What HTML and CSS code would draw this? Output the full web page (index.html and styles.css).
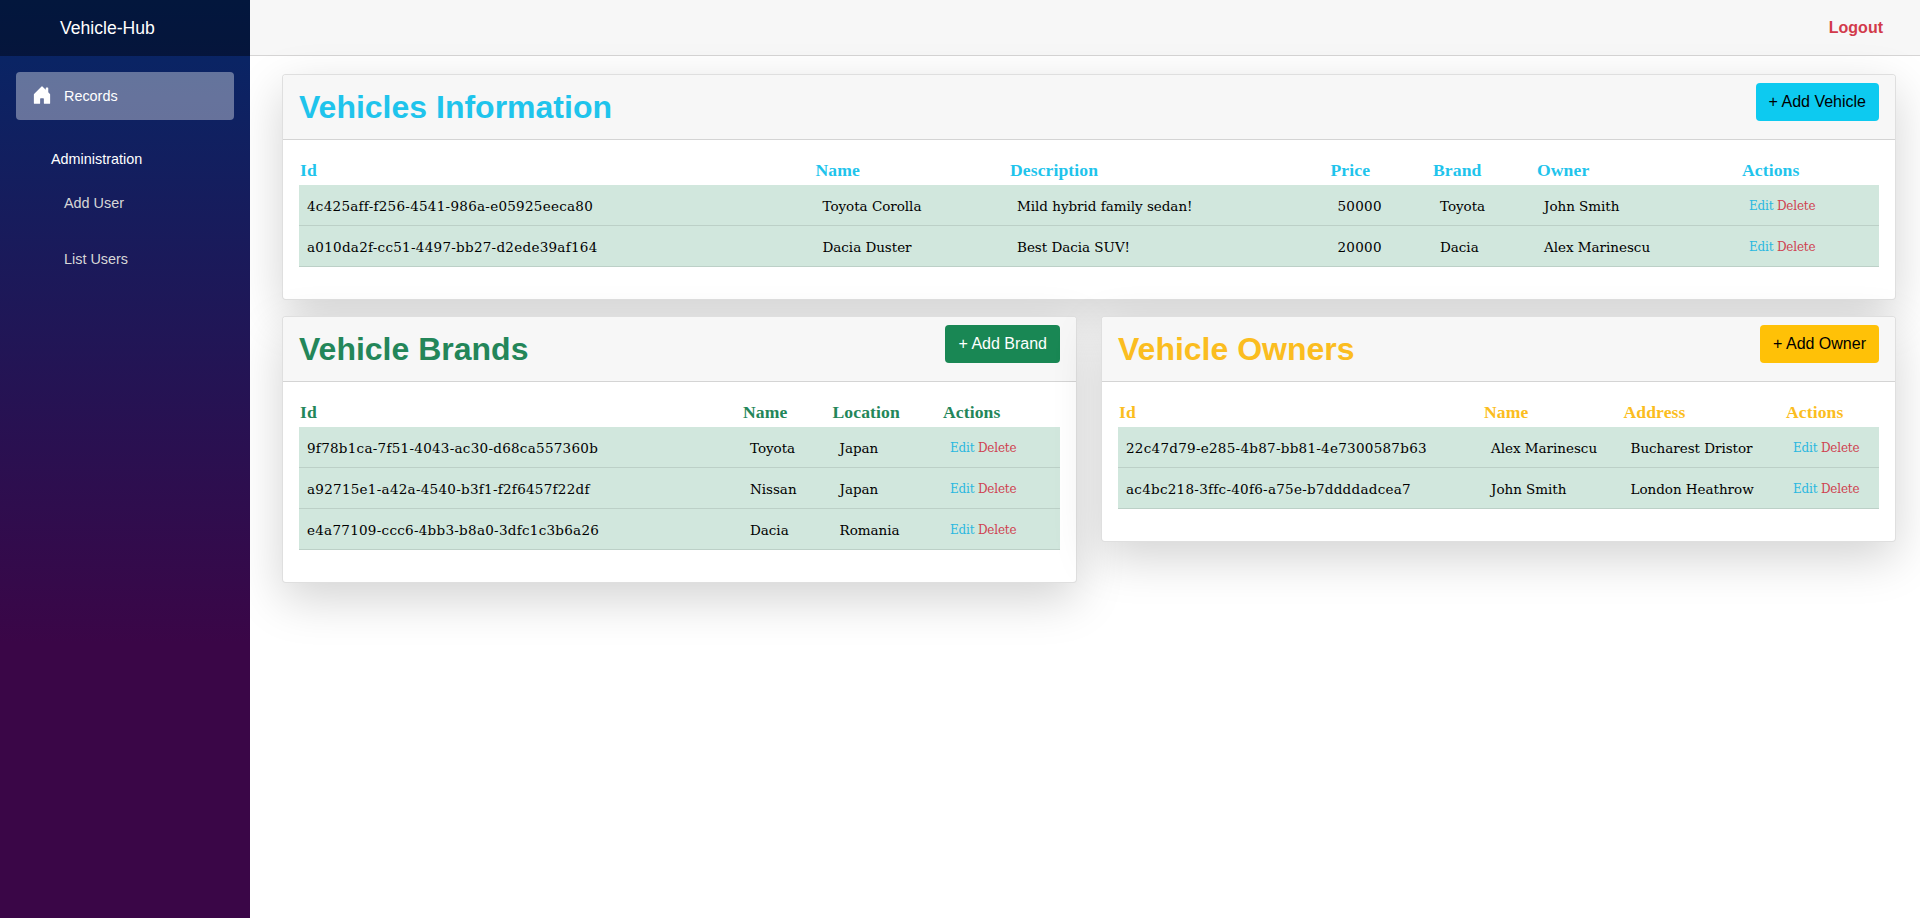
FILE: index.html
```html
<!DOCTYPE html>
<html lang="en">
<head>
<meta charset="utf-8">
<title>Vehicle-Hub</title>
<link rel="stylesheet" href="styles.css">
</head>
<body>
<div class="page">
  <aside class="sidebar">
    <div class="brand">Vehicle-Hub</div>
    <nav class="nav">
      <a class="nav-link active"><svg class="icon" viewBox="0 0 16 16"><path fill="currentColor" d="M6.5 14.5v-3.505c0-.245.25-.495.5-.495h2c.25 0 .5.25.5.5v3.5a.5.5 0 0 0 .5.5h4a.5.5 0 0 0 .5-.5v-7a.5.5 0 0 0-.146-.354L13 5.793V2.5a.5.5 0 0 0-.5-.5h-1a.5.5 0 0 0-.5.5v1.293L8.354 1.146a.5.5 0 0 0-.708 0l-6 6A.5.5 0 0 0 1.5 7.5v7a.5.5 0 0 0 .5.5h4a.5.5 0 0 0 .5-.5Z"/></svg>Records</a>
      <div class="nav-title">Administration</div>
      <a class="nav-link sub">Add User</a>
      <a class="nav-link sub">List Users</a>
    </nav>
  </aside>
  <main class="main">
    <header class="topbar"><a class="logout">Logout</a></header>
    <div class="content">
      <section class="card wide info">
        <div class="card-header"><h2>Vehicles Information</h2><button class="btn">+ Add Vehicle</button></div>
        <div class="card-body">
          <table class="table">
            <colgroup><col class="v-id"><col class="v-name"><col class="v-desc"><col class="v-price"><col class="v-brand"><col class="v-owner"><col></colgroup>
            <thead><tr><th>Id</th><th>Name</th><th>Description</th><th>Price</th><th>Brand</th><th>Owner</th><th>Actions</th></tr></thead>
            <tbody>
              <tr><td class="num">4c425aff-f256-4541-986a-e05925eeca80</td><td>Toyota Corolla</td><td>Mild hybrid family sedan!</td><td class="num">50000</td><td>Toyota</td><td>John Smith</td><td class="actions"><a class="edit">Edit</a> <a class="delete">Delete</a></td></tr>
              <tr><td class="num">a010da2f-cc51-4497-bb27-d2ede39af164</td><td>Dacia Duster</td><td>Best Dacia SUV!</td><td class="num">20000</td><td>Dacia</td><td>Alex Marinescu</td><td class="actions"><a class="edit">Edit</a> <a class="delete">Delete</a></td></tr>
            </tbody>
          </table>
        </div>
      </section>
      <section class="card success">
        <div class="card-header"><h2>Vehicle Brands</h2><button class="btn">+ Add Brand</button></div>
        <div class="card-body">
          <table class="table">
            <colgroup><col class="b-id"><col class="b-name"><col class="b-loc"><col></colgroup>
            <thead><tr><th>Id</th><th>Name</th><th>Location</th><th>Actions</th></tr></thead>
            <tbody>
              <tr><td class="num">9f78b1ca-7f51-4043-ac30-d68ca557360b</td><td>Toyota</td><td>Japan</td><td class="actions"><a class="edit">Edit</a> <a class="delete">Delete</a></td></tr>
              <tr><td class="num">a92715e1-a42a-4540-b3f1-f2f6457f22df</td><td>Nissan</td><td>Japan</td><td class="actions"><a class="edit">Edit</a> <a class="delete">Delete</a></td></tr>
              <tr><td class="num">e4a77109-ccc6-4bb3-b8a0-3dfc1c3b6a26</td><td>Dacia</td><td>Romania</td><td class="actions"><a class="edit">Edit</a> <a class="delete">Delete</a></td></tr>
            </tbody>
          </table>
        </div>
      </section>
      <section class="card warning">
        <div class="card-header"><h2>Vehicle Owners</h2><button class="btn">+ Add Owner</button></div>
        <div class="card-body">
          <table class="table">
            <colgroup><col class="o-id"><col class="o-name"><col class="o-addr"><col></colgroup>
            <thead><tr><th>Id</th><th>Name</th><th>Address</th><th>Actions</th></tr></thead>
            <tbody>
              <tr><td class="num">22c47d79-e285-4b87-bb81-4e7300587b63</td><td>Alex Marinescu</td><td>Bucharest Dristor</td><td class="actions"><a class="edit">Edit</a> <a class="delete">Delete</a></td></tr>
              <tr><td class="num">ac4bc218-3ffc-40f6-a75e-b7ddddadcea7</td><td>John Smith</td><td>London Heathrow</td><td class="actions"><a class="edit">Edit</a> <a class="delete">Delete</a></td></tr>
            </tbody>
          </table>
        </div>
      </section>
    </div>
  </main>
</div>
</body>
</html>
```
FILE: styles.css
```css
* { box-sizing: border-box; }
body { margin: 0; font: 16px/24px "Liberation Sans", Arial, sans-serif; color: #000; background: #fff; }
.page { display: flex; height: 918px; overflow: hidden; }

.sidebar { width: 250px; flex: none; color: #fff; background: linear-gradient(180deg, rgb(5, 39, 103) 0%, #3a0647 70%); position: relative; z-index: 1; }
.brand { height: 56px; padding-left: 60px; font-size: 17.6px; line-height: 56px; background: rgba(0, 0, 0, .4); }
.nav { padding: 16px 16px 0; font-size: 14.4px; }
.nav-link { display: flex; align-items: center; height: 48px; padding-left: 16px; border-radius: 4px; }
.nav-link.active { background: rgba(255, 255, 255, .37); }
.icon { width: 20px; height: 20px; margin: 0 12px 2px 0; }
.nav-title { height: 48px; line-height: 48px; padding-left: 35px; margin-top: 15px; }
.nav-link.sub { padding-left: 48px; margin-bottom: 8px; color: #d7d7d7; }
.nav-title + .nav-link.sub { margin-top: -4px; }

.main { flex: 1; min-width: 0; }
.topbar { height: 56px; display: flex; align-items: center; justify-content: flex-end; padding-right: 37px; background: #f7f7f7; border-bottom: 1px solid #d6d5d5; }
.logout { color: #d23a4b; font-weight: bold; }
.content { display: grid; grid-template-columns: 1fr 1fr; gap: 16px 24px; align-items: start; padding: 18px 24px 0 32px; }

.card { background: #fff; border: 1px solid rgba(0, 0, 0, .125); background-clip: border-box; border-radius: 4px; box-shadow: 0 16px 48px rgba(0, 0, 0, .175); }
.card.wide { grid-column: 1 / 3; }
.card-header { height: 65px; display: flex; justify-content: space-between; align-items: flex-start; padding: 8px 16px; background: #f7f7f7; border-bottom: 1px solid #d4d4d4; border-radius: 3px 3px 0 0; }
.card-header h2 { margin: 0; font-size: 32px; line-height: 48px; font-weight: bold; color: var(--accent); }
.card-body { padding: 16px 16px 32px; }
.info { --accent: #0dcaf0; --on-accent: #000; }
.success { --accent: #198754; --on-accent: #fff; }
.warning { --accent: #ffc107; --on-accent: #000; }
.btn { height: 38px; padding: 0 13px; border: 0; border-radius: 4px; font: 16px/24px "Liberation Sans", Arial, sans-serif; color: var(--on-accent); background: var(--accent); }
.info h2, .info th { color: #1fc4ec; }
.success h2, .success th { color: #238659; }
.warning h2, .warning th { color: #fbbd20; }

.table { width: 100%; table-layout: fixed; border-collapse: separate; border-spacing: 0; }
.table th { height: 29px; padding: 2px 1px 3px; text-align: left; font: bold 17.6px/24px "Liberation Serif", "Times New Roman", serif; letter-spacing: .1px; }
.table td { height: 41px; padding: 9px 8px 7px; font: 13.5px/24px "DejaVu Serif", serif; letter-spacing: -.03px; white-space: nowrap; background: #d1e7dd; border-bottom: 1px solid #bcd0c7; }
.table td.num { letter-spacing: .27px; }
.table td.actions { font-size: 12px; letter-spacing: -.2px; }
.edit { color: #2ab8e0; }
.delete { color: #cf4250; }
.v-id { width: 515.5px; }
.v-name { width: 194.5px; }
.v-desc { width: 320.5px; }
.v-price { width: 102.5px; }
.v-brand { width: 104px; }
.v-owner { width: 205px; }
.b-id { width: 443px; }
.b-name { width: 89.5px; }
.b-loc { width: 110.5px; }
.o-id { width: 365px; }
.o-name { width: 139.5px; }
.o-addr { width: 162.5px; }
```
